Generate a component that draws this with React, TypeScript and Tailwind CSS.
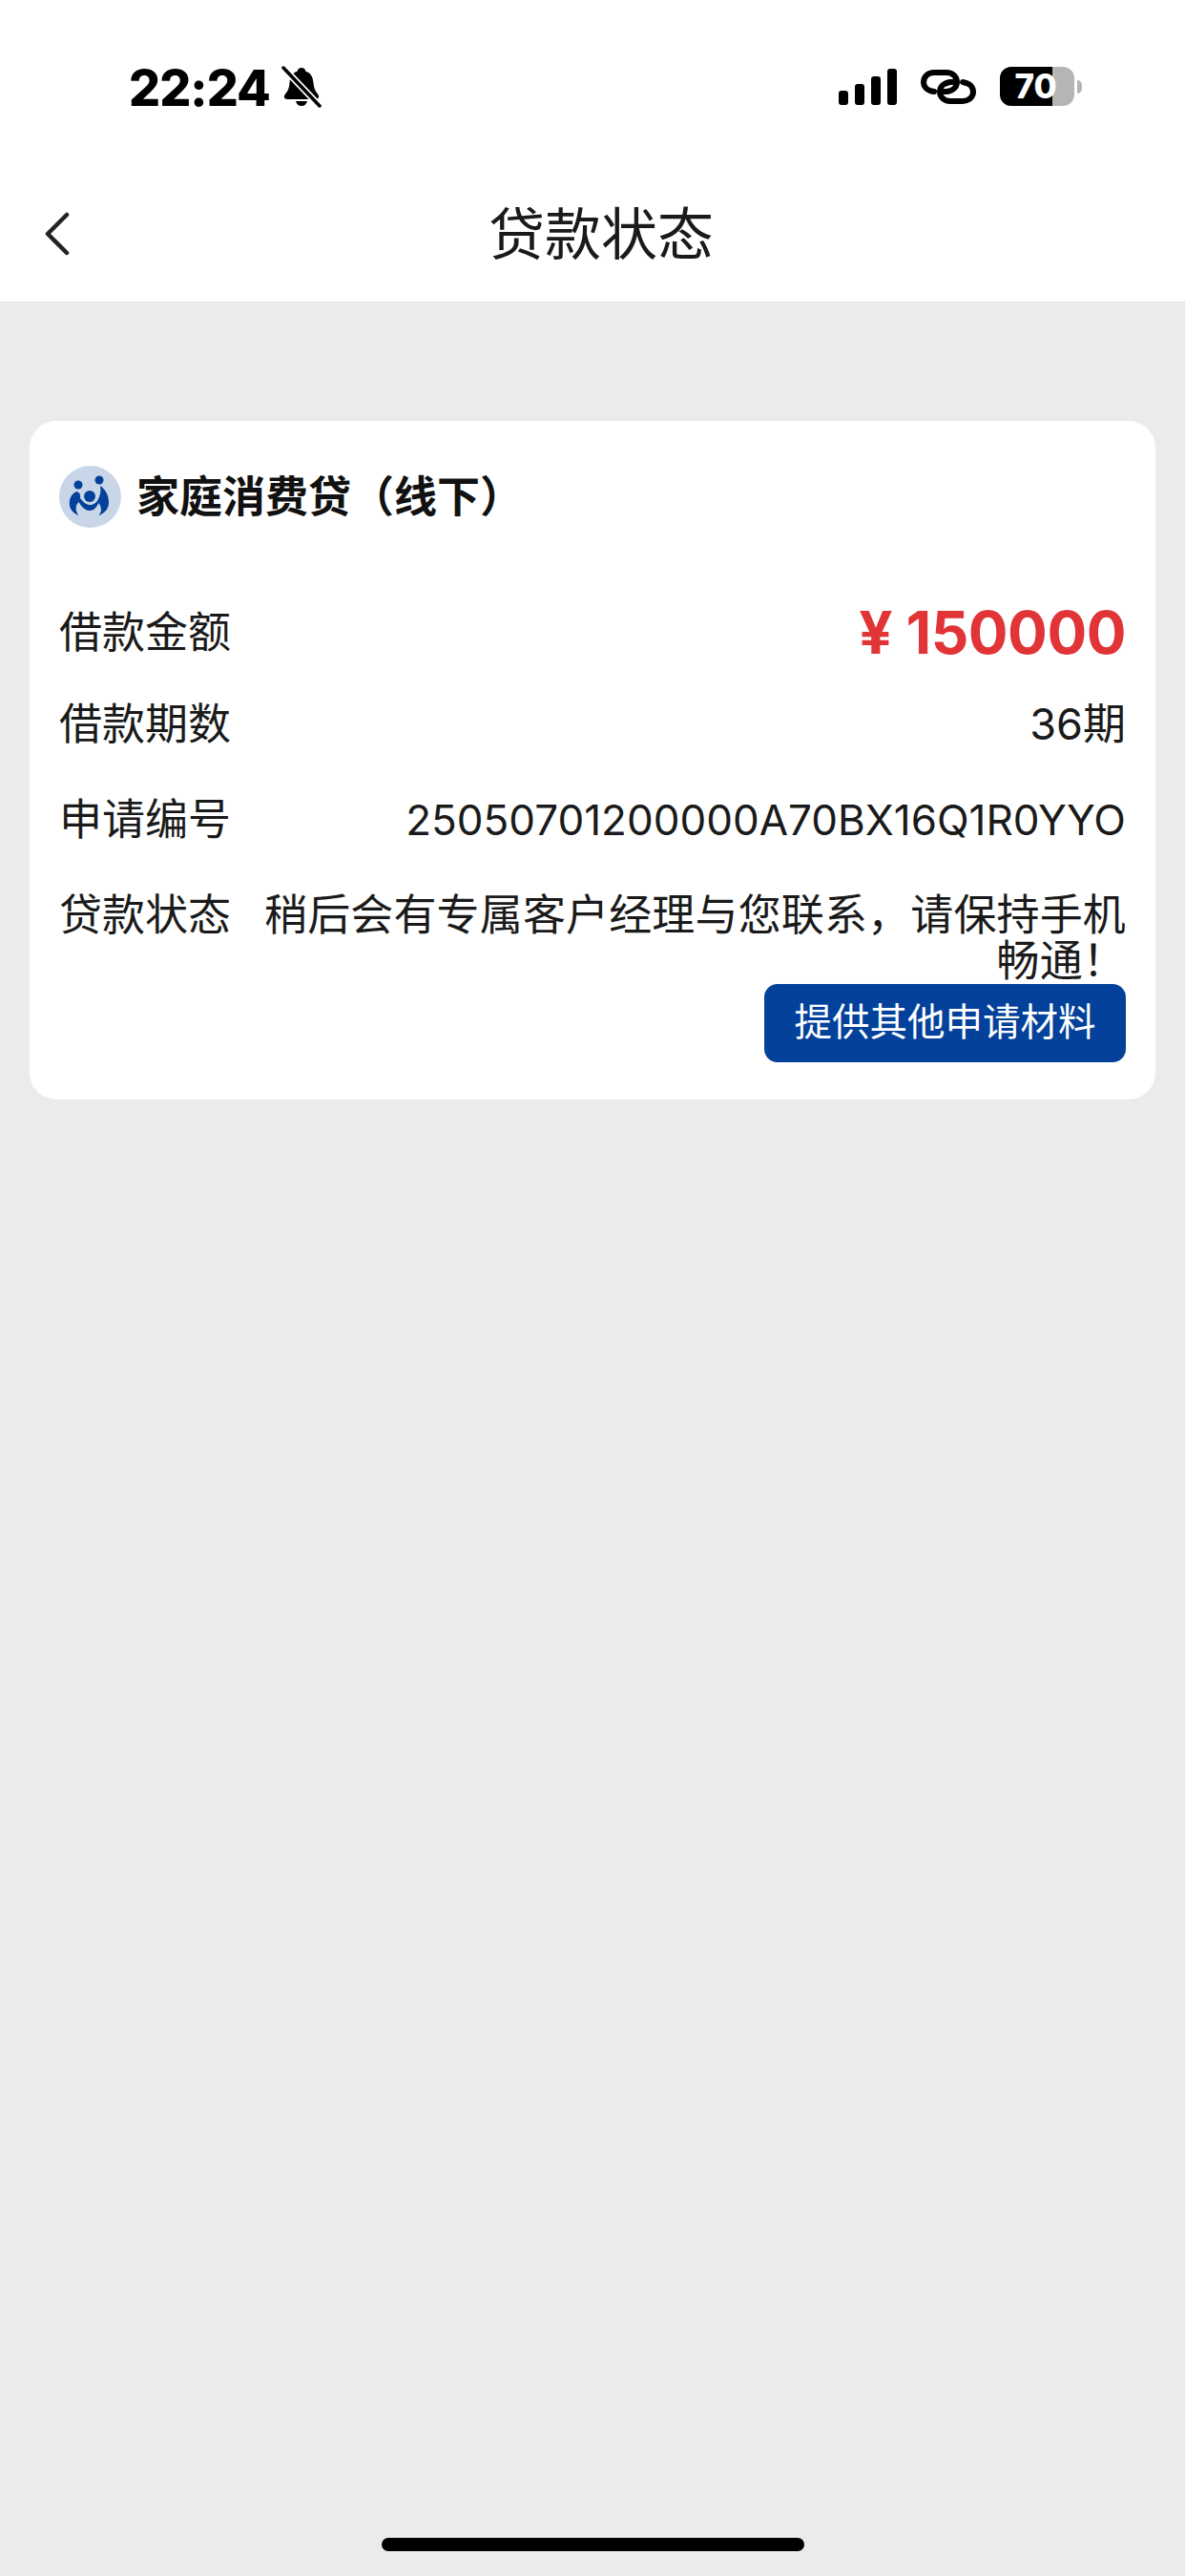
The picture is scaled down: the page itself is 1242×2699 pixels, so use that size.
const cjk = "font-['Inter','Noto_Sans_CJK_SC',sans-serif]";

function StatusBar() {
  return (
    <div className="flex h-[180px] items-start justify-between pt-[64px] pl-[135px] pr-[108px]">
      <div className="flex items-center gap-[12px]">
        <span className="font-['Inter',sans-serif] text-[52px] leading-[58px] font-extrabold tracking-[-1px] text-black">22:24</span>
        <svg width="42" height="44" viewBox="0 0 42 44" className="mt-[-4px]">
          <path d="M21 2c-2.500 0-4 1.600-4.400 3.800C11 7.500 9 12 8.500 18c-.4 5-1.500 8-4.500 11.500-2 2.300-1.200 5.500 2 5.500h30c3.200 0 4-3.200 2-5.500-3-3.500-4-6.500-4.500-11.500C33 12 31 7.500 25.400 5.800 25 3.600 23.500 2 21 2z" fill="#000" />
          <path d="M15 37h12c-.6 3-3 5-6 5s-5.400-2-6-5z" fill="#000" />
          <path d="M2 2 L40 42" stroke="#fff" strokeWidth="7" />
          <path d="M2 2 L40 42" stroke="#000" strokeWidth="3.500" strokeLinecap="round" />
        </svg>
      </div>
      <div className="flex items-center gap-[25px] mt-[6px]">
        <svg width="61" height="38" viewBox="0 0 61 38" fill="#000">
          <rect x="0" y="23" width="10" height="15" rx="3" />
          <rect x="17" y="16" width="10" height="22" rx="3" />
          <rect x="34" y="8" width="10" height="30" rx="3" />
          <rect x="51" y="0" width="10" height="38" rx="3" />
        </svg>
        <svg width="58" height="36" viewBox="0 0 58 36" fill="none" stroke="#000" strokeWidth="6" strokeLinecap="round">
          <path d="M14 23 C7 22 3 18 3 13 S7 3 14 3 H27 C34 3 38 8 38 13 S34 22 27 23 H24" />
          <path d="M44 13 C51 14 55 18 55 23 S51 33 44 33 H31 C24 33 20 28 20 23 S24 14 31 13 H34" />
        </svg>
        <div className="flex items-center gap-[3px]">
          <div className="relative flex h-[41px] w-[78px] overflow-hidden rounded-[12px] bg-[#b5b5b5]">
            <div className="h-full w-[55px] bg-black" />
            <span className="absolute inset-0 flex items-center justify-center pr-[3px] font-['Inter',sans-serif] text-[35px] font-extrabold text-white">70</span>
          </div>
          <div className="h-[14px] w-[5px] rounded-r-full bg-[#b5b5b5]" />
        </div>
      </div>
    </div>
  );
}

function Logo() {
  return (
    <svg width="65" height="65" viewBox="0 0 65 65" className="shrink-0">
      <circle cx="32.500" cy="32.500" r="32.500" fill="#c9d6e8" />
      <g fill="#03419b">
        <circle cx="20" cy="20" r="4.500" />
        <circle cx="42" cy="15" r="4.500" />
        <circle cx="32" cy="32" r="6" />
        <path d="M18 27 C12 30 10 36 11 42 C12 47 16 50 20 52 C18 48 17 45 18 42 C18.500 40 19.500 39 20.500 38 C24 44 28 47 32 47 C36 47 39 44 41.500 39 C43 41 44 44 44 46 C44 48 43 50 41.500 52 C47 50 52 46 52 38 C52 31 48 24 43 21 C44 26 43 31 41 35 C39 39 36 41 32 41 C28 41 24.500 37 22 34 C22.500 31 22 28 18 27 Z" />
      </g>
    </svg>
  );
}

function Row({ label, children, className = "" }: { label: string; children: React.ReactNode; className?: string }) {
  return (
    <div className={`flex items-center justify-between ${className}`}>
      <span className="text-[45px] leading-[52px] text-[#1a1a1a] shrink-0">{label}</span>
      {children}
    </div>
  );
}

export default function App() {
  return (
    <div className={`flex h-[2699px] w-[1242px] flex-col bg-[#ebebeb] ${cjk}`}>
      <header className="bg-white border-b border-[#e4e4e4]">
        <StatusBar />
        <div className="relative flex h-[136px] items-start justify-center">
          <svg width="28" height="46" viewBox="0 0 28 46" fill="none" className="absolute left-[46px] top-[42px]">
            <path d="M24 3 L4 23 L24 43" stroke="#222" strokeWidth="4.500" strokeLinecap="round" strokeLinejoin="round" />
          </svg>
          <h1 className="mt-[27px] ml-[18px] text-[59px] leading-[78px] font-normal text-[#1a1a1a]">贷款状态</h1>
        </div>
      </header>

      <main className="mx-[31px] mt-[124px] rounded-[28px] bg-white pt-[47px] pr-[31px] pb-[39px] pl-[31px]">
        <div className="flex items-center gap-[16px]">
          <Logo />
          <span className="text-[45px] leading-[65px] font-bold text-[#111]">家庭消费贷（线下）</span>
        </div>
        <Row label="借款金额" className="mt-[75px] h-[70px]">
          <span className="text-[62px] leading-[70px] font-bold tracking-[-0.5px] text-[#e03437]">¥ 150000</span>
        </Row>
        <Row label="借款期数" className="mt-[31px] h-[60px]">
          <span className="text-[45px] leading-[52px] text-[#1a1a1a]">36期</span>
        </Row>
        <Row label="申请编号" className="mt-[44px] h-[52px]">
          <span className="text-[44px] leading-[52px] text-[#1a1a1a]">25050701200000A70BX16Q1R0YYO</span>
        </Row>
        <div className="mt-[50px] flex justify-between">
          <span className="text-[45px] leading-[48px] text-[#1a1a1a] shrink-0">贷款状态</span>
          <p className="w-[910px] text-right text-[45px] leading-[48px] tracking-[0.15px] text-[#1a1a1a]">稍后会有专属客户经理与您联系，请保持手机畅通！</p>
        </div>
        <div className="flex justify-end">
          <button className="h-[82px] w-[379px] rounded-[14px] bg-[#03419b] text-[39.500px] text-white">提供其他申请材料</button>
        </div>
      </main>

      <div className="mt-auto mb-[26px] mx-auto h-[14px] w-[443px] rounded-full bg-black" />
    </div>
  );
}
